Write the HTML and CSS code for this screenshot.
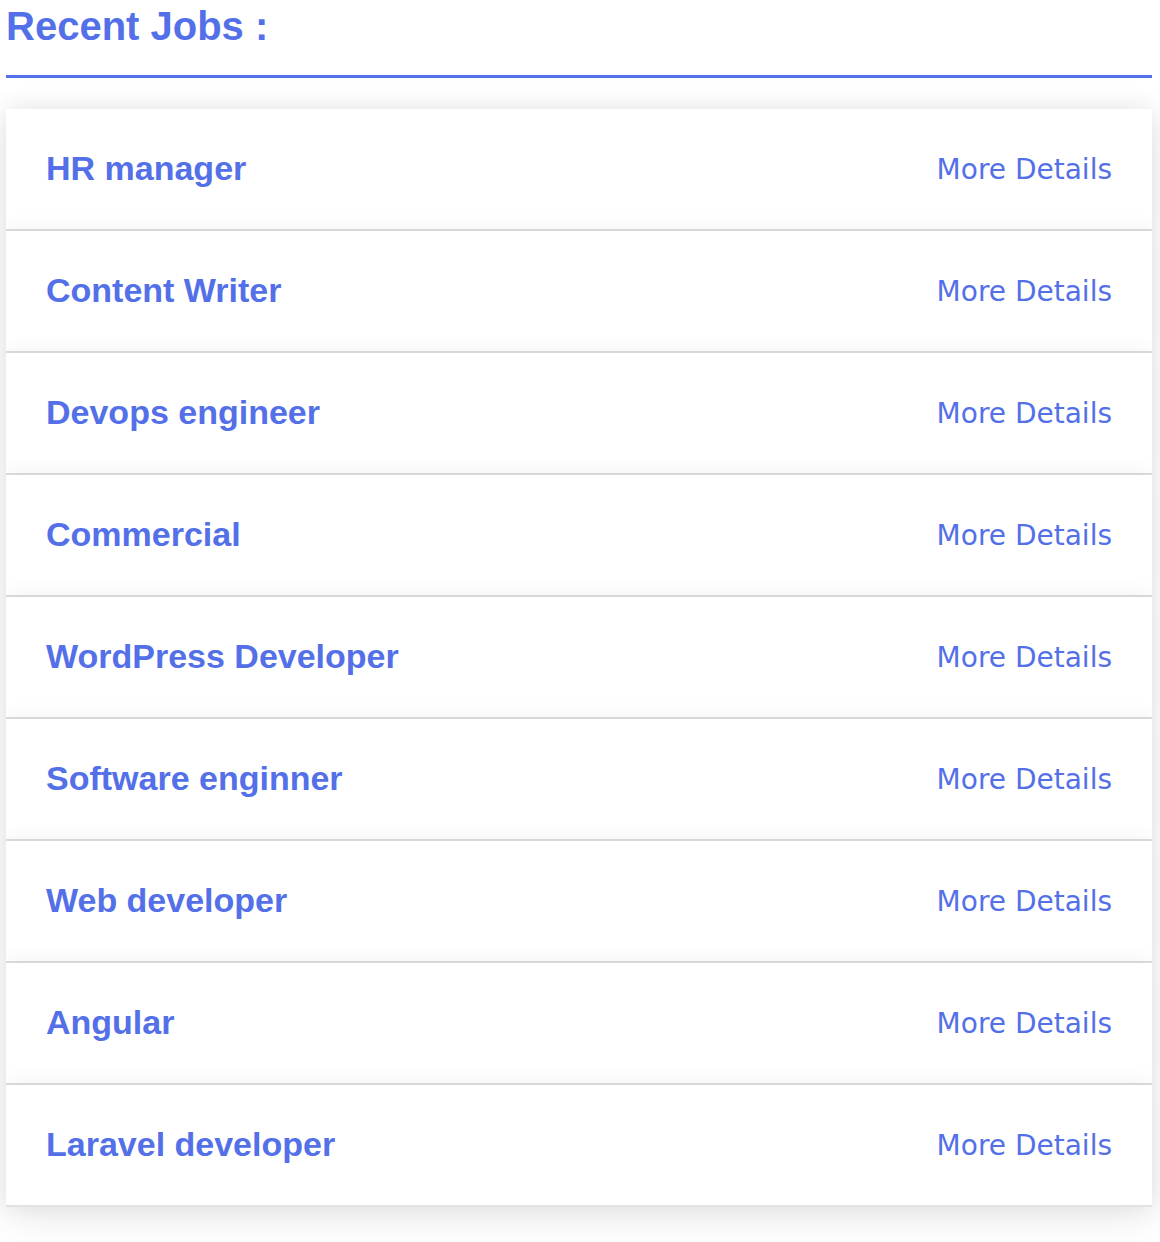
FILE: index.html
```html
<!DOCTYPE html>
<html lang="en">
<head>
<meta charset="utf-8">
<title>Recent Jobs</title>
<link rel="stylesheet" href="styles.css">
</head>
<body>
<div class="page">
  <h2 class="title">Recent Jobs :</h2>
  <div class="rule"></div>
  <ul class="jobs">
    <li class="job"><span class="job-name">HR manager</span><a class="more" href="#">More Details</a></li>
    <li class="job"><span class="job-name">Content Writer</span><a class="more" href="#">More Details</a></li>
    <li class="job"><span class="job-name">Devops engineer</span><a class="more" href="#">More Details</a></li>
    <li class="job"><span class="job-name">Commercial</span><a class="more" href="#">More Details</a></li>
    <li class="job"><span class="job-name">WordPress Developer</span><a class="more" href="#">More Details</a></li>
    <li class="job"><span class="job-name">Software enginner</span><a class="more" href="#">More Details</a></li>
    <li class="job"><span class="job-name">Web developer</span><a class="more" href="#">More Details</a></li>
    <li class="job"><span class="job-name">Angular</span><a class="more" href="#">More Details</a></li>
    <li class="job"><span class="job-name">Laravel developer</span><a class="more" href="#">More Details</a></li>
  </ul>
</div>
</body>
</html>
```
FILE: styles.css
```css
html, body {
  margin: 0;
  padding: 0;
  background: #fff;
}
.page {
  padding: 0 8px 60px 6px;
}
.title {
  margin: 0;
  padding-top: 4px;
  font-family: "Liberation Sans", Arial, sans-serif;
  font-weight: bold;
  font-size: 40px;
  line-height: normal;
  color: #5470e8;
}
.rule {
  margin-top: 26px;
  height: 3px;
  background: #5470e8;
}
.jobs {
  list-style: none;
  margin: 31px 0 0 0;
  padding: 0;
  background: #fff;
  box-shadow: 0 10px 40px rgba(0, 0, 0, 0.09);
}
.job {
  position: relative;
  display: flex;
  align-items: center;
  justify-content: space-between;
  height: 120px;
  padding: 0 40px 0 40px;
  background: #fff;
  border-bottom: 2px solid #dedede;
  box-shadow: 0 0 22px rgba(0, 0, 0, 0.07);
}
.job:last-child {
  border-bottom: 2px solid #e2e2e2;
}
.job-name {
  font-family: "Liberation Sans", Arial, sans-serif;
  font-weight: bold;
  font-size: 34px;
  color: #5470e8;
  margin-top: -2px;
}
.more {
  font-family: "DejaVu Sans", sans-serif;
  font-size: 28px;
  color: #5470e8;
  text-decoration: none;
}
```
